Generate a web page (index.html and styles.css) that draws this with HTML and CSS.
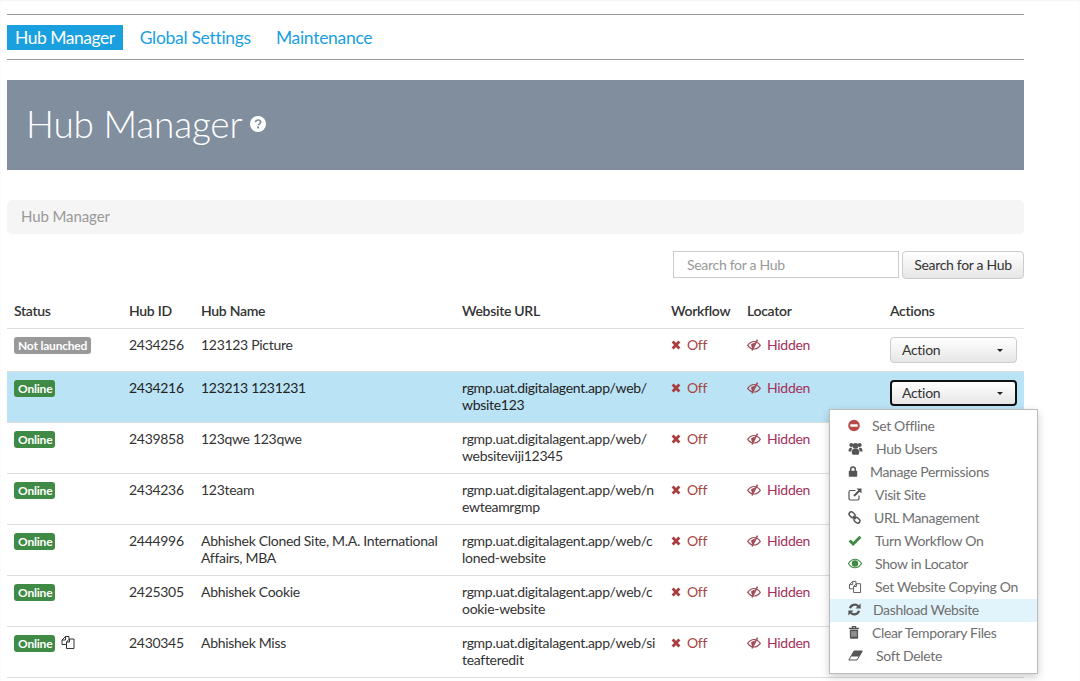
FILE: index.html
```html
<!DOCTYPE html>
<html lang="en">
<head>
<meta charset="utf-8">
<title>Hub Manager</title>
<link rel="stylesheet" href="styles.css">
</head>
<body>
<svg class="defs" width="0" height="0" aria-hidden="true">
  <symbol id="i-times" viewBox="0 0 12 12"><path d="M2.6 2.6l6.8 6.8M9.400 2.600l-6.800 6.800" fill="none" stroke="currentColor" stroke-width="2.800"/></symbol>
  <symbol id="i-slash" viewBox="0 0 14 12"><path d="M.7 6.300C2.500 3.800 4.600 2.500 7 2.500s4.500 1.300 6.300 3.800C11.500 8.800 9.400 10 7 10S2.500 8.800.7 6.300z" fill="none" stroke="currentColor" stroke-width="1.200"/><path d="M4.300 5l3.900-1.400L5.800 9.500C4.600 8.500 3.900 6.500 4.300 5z" fill="currentColor"/><path d="M10.500.6L5 11.500" fill="none" stroke="currentColor" stroke-width="1.500"/></symbol>
  <symbol id="i-copy" viewBox="0 0 14 14"><path d="M1 9.500V5l3.500-3.500H8V4M1 9.500h4M1 5h3.500V1.500M5.500 6.800l3-2.800H13v9.500H5.500zM8.500 4v3h-3" fill="none" stroke="currentColor" stroke-width="1"/></symbol>
  <symbol id="i-minus" viewBox="0 0 12 12"><circle cx="6" cy="6" r="5.800" fill="currentColor"/><rect x="2.300" y="4.800" width="7.400" height="2.400" fill="#fff"/></symbol>
  <symbol id="i-users" viewBox="0 0 14 13"><circle cx="2.800" cy="3" r="2" fill="currentColor"/><circle cx="11.200" cy="3" r="2" fill="currentColor"/><circle cx="7" cy="3.800" r="2.900" fill="currentColor"/><path d="M0 9C0 7 .8 5.700 2 5.700h1.800C3.200 6.700 2.900 8 2.900 9.500H1C.4 9.500 0 9.400 0 9zM14 9c0-2-.8-3.300-2-3.300h-1.800c.6 1 .9 2.300.9 3.800H13c.6 0 1-.1 1-.5z" fill="currentColor"/><path d="M3.300 10.500c0-2.300.9-3.800 2-3.800h3.400c1.100 0 2 1.500 2 3.800 0 1.500-.8 2.300-1.800 2.300H5.100c-1 0-1.800-.8-1.800-2.300z" fill="currentColor"/></symbol>
  <symbol id="i-lock" viewBox="0 0 10 12"><path d="M2.700 5.500V3.800a2.300 2.300 0 0 1 4.600 0v1.700" fill="none" stroke="currentColor" stroke-width="1.500"/><rect x="0.800" y="5.300" width="8.400" height="5.900" rx="0.700" fill="currentColor"/></symbol>
  <symbol id="i-ext" viewBox="0 0 14 13"><path d="M11 7.500v3a1.500 1.500 0 0 1-1.500 1.500h-7A1.500 1.500 0 0 1 1 10.500v-6.500A1.500 1.500 0 0 1 2.500 2.500h5" fill="none" stroke="currentColor" stroke-width="1.200"/><path d="M8.500 0.500h5v5l-1.800-1.800-5 5-1.400-1.400 5-5z" fill="currentColor"/></symbol>
  <symbol id="i-link" viewBox="0 0 13 13"><g fill="none" stroke="currentColor" stroke-width="1.500"><rect x="0.900" y="1.500" width="6.400" height="4.400" rx="2.200" transform="rotate(42 4 3.700)"/><rect x="5.700" y="7.100" width="6.400" height="4.400" rx="2.200" transform="rotate(42 9 9.300)"/></g><path d="M5 5l3 3" stroke="currentColor" stroke-width="1.200"/></symbol>
  <symbol id="i-check" viewBox="0 0 13 11"><path d="M1.500 5.500l3.300 3.300 6.700-6.800" fill="none" stroke="currentColor" stroke-width="2.700"/></symbol>
  <symbol id="i-eye" viewBox="0 0 14 10"><path d="M.5 5C2.200 2.100 4.500.7 7 .7s4.800 1.400 6.500 4.300C11.800 7.900 9.500 9.300 7 9.300S2.200 7.900.5 5z" fill="none" stroke="currentColor" stroke-width="1.100"/><circle cx="7" cy="5" r="3.200" fill="currentColor"/></symbol>
  <symbol id="i-sync" viewBox="0 0 13 13"><path d="M2 5.200A4.800 4.800 0 0 1 10.200 3.200" fill="none" stroke="currentColor" stroke-width="2.300"/><path d="M12.600.5v5.100H7.500z" fill="currentColor"/><path d="M11 7.800A4.800 4.800 0 0 1 2.800 9.800" fill="none" stroke="currentColor" stroke-width="2.300"/><path d="M.4 12.500V7.400h5.100z" fill="currentColor"/></symbol>
  <symbol id="i-trash" viewBox="0 0 10 12"><path d="M3.500 1.600V.6h3v1M.3 2.200h9.400" fill="none" stroke="currentColor" stroke-width="1.100"/><path d="M1.200 3.300h7.600v7.500c0 .6-.4.900-.9.900H2.100c-.5 0-.9-.3-.9-.9z" fill="currentColor"/><path d="M3.200 4.800v5M5 4.800v5M6.800 4.800v5" stroke="#fff" stroke-width=".6"/></symbol>
  <symbol id="i-eraser" viewBox="0 0 15 11"><path d="M6 1h8.300L9 10H.8z" fill="none" stroke="currentColor" stroke-width="1"/><path d="M6 1h8.300l-3 5.500H3.300z" fill="currentColor"/></symbol>
</svg>

<nav class="tabs">
  <a class="tab active">Hub Manager</a>
  <a class="tab">Global Settings</a>
  <a class="tab">Maintenance</a>
</nav>

<header class="banner">
  <h1 class="title">Hub Manager</h1>
  <svg class="help" viewBox="0 0 16 16" aria-hidden="true"><circle cx="8" cy="8" r="8" fill="#fff"/><path d="M5.500 6.300C5.600 4.800 6.700 4 8.100 4c1.500 0 2.500.9 2.500 2.100 0 1.800-2.100 1.800-2.100 3.200" fill="none" stroke="#818e9e" stroke-width="1.700"/><rect x="7.100" y="10.400" width="2" height="2" fill="#818e9e"/></svg>
</header>

<div class="crumb">Hub Manager</div>

<form class="search">
  <input class="search-input" type="text" placeholder="Search for a Hub">
  <button class="btn search-btn" type="button">Search for a Hub</button>
</form>

<table class="hubs">
  <colgroup>
    <col class="c-status"><col class="c-id"><col class="c-name"><col class="c-url"><col class="c-wf"><col class="c-loc"><col class="c-act">
  </colgroup>
  <thead>
    <tr><th>Status</th><th>Hub ID</th><th>Hub Name</th><th>Website URL</th><th>Workflow</th><th>Locator</th><th>Actions</th></tr>
  </thead>
  <tbody>
    <tr>
      <td><span class="badge grey">Not launched</span></td><td>2434256</td><td>123123 Picture</td><td class="url"></td>
      <td class="off"><svg class="ic-x"><use href="#i-times"/></svg>Off</td>
      <td class="hid"><svg class="ic-h"><use href="#i-slash"/></svg>Hidden</td>
      <td class="act"><button class="btn action" type="button">Action<span class="caret"></span></button></td>
    </tr>
    <tr class="selected">
      <td><span class="badge green">Online</span></td><td>2434216</td><td>123213 1231231</td><td class="url">rgmp.uat.digitalagent.app/web/wbsite123</td>
      <td class="off"><svg class="ic-x"><use href="#i-times"/></svg>Off</td>
      <td class="hid"><svg class="ic-h"><use href="#i-slash"/></svg>Hidden</td>
      <td class="act">
        <button class="btn action focused" type="button">Action<span class="caret"></span></button>
        <ul class="menu">
          <li class="item"><svg class="mi red w-a"><use href="#i-minus"/></svg>Set Offline</li>
          <li class="item"><svg class="mi w-b"><use href="#i-users"/></svg>Hub Users</li>
          <li class="item"><svg class="mi w-c"><use href="#i-lock"/></svg>Manage Permissions</li>
          <li class="item"><svg class="mi w-d"><use href="#i-ext"/></svg>Visit Site</li>
          <li class="item"><svg class="mi w-e"><use href="#i-link"/></svg>URL Management</li>
          <li class="item"><svg class="mi grn w-d"><use href="#i-check"/></svg>Turn Workflow On</li>
          <li class="item"><svg class="mi grn w-d"><use href="#i-eye"/></svg>Show in Locator</li>
          <li class="item"><svg class="mi w-d"><use href="#i-copy"/></svg>Set Website Copying On</li>
          <li class="item hover"><svg class="mi w-f"><use href="#i-sync"/></svg>Dashload Website</li>
          <li class="item"><svg class="mi w-a"><use href="#i-trash"/></svg>Clear Temporary Files</li>
          <li class="item"><svg class="mi w-b"><use href="#i-eraser"/></svg>Soft Delete</li>
        </ul>
      </td>
    </tr>
    <tr>
      <td><span class="badge green">Online</span></td><td>2439858</td><td>123qwe 123qwe</td><td class="url">rgmp.uat.digitalagent.app/web/websiteviji12345</td>
      <td class="off"><svg class="ic-x"><use href="#i-times"/></svg>Off</td>
      <td class="hid"><svg class="ic-h"><use href="#i-slash"/></svg>Hidden</td>
      <td class="act"></td>
    </tr>
    <tr>
      <td><span class="badge green">Online</span></td><td>2434236</td><td>123team</td><td class="url">rgmp.uat.digitalagent.app/web/newteamrgmp</td>
      <td class="off"><svg class="ic-x"><use href="#i-times"/></svg>Off</td>
      <td class="hid"><svg class="ic-h"><use href="#i-slash"/></svg>Hidden</td>
      <td class="act"></td>
    </tr>
    <tr>
      <td><span class="badge green">Online</span></td><td>2444996</td><td>Abhishek Cloned Site, M.A. International Affairs, MBA</td><td class="url">rgmp.uat.digitalagent.app/web/cloned-website</td>
      <td class="off"><svg class="ic-x"><use href="#i-times"/></svg>Off</td>
      <td class="hid"><svg class="ic-h"><use href="#i-slash"/></svg>Hidden</td>
      <td class="act"></td>
    </tr>
    <tr>
      <td><span class="badge green">Online</span></td><td>2425305</td><td>Abhishek Cookie</td><td class="url">rgmp.uat.digitalagent.app/web/cookie-website</td>
      <td class="off"><svg class="ic-x"><use href="#i-times"/></svg>Off</td>
      <td class="hid"><svg class="ic-h"><use href="#i-slash"/></svg>Hidden</td>
      <td class="act"></td>
    </tr>
    <tr>
      <td><span class="badge green">Online</span><svg class="ic-copy"><use href="#i-copy"/></svg></td><td>2430345</td><td>Abhishek Miss</td><td class="url">rgmp.uat.digitalagent.app/web/siteafteredit</td>
      <td class="off"><svg class="ic-x"><use href="#i-times"/></svg>Off</td>
      <td class="hid"><svg class="ic-h"><use href="#i-slash"/></svg>Hidden</td>
      <td class="act"></td>
    </tr>
  </tbody>
</table>
</body>
</html>
```

FILE: styles.css
```css
* { box-sizing: border-box; }
html, body { margin: 0; height: 681px; overflow: hidden; background: #fff; }
body {
  padding: 14px 56px 0 7px;
  font: 14px/17px Lato, "Liberation Sans", sans-serif;
  letter-spacing: -.3px;
  color: #333;
  box-shadow: inset 0 1px 2px rgba(0, 0, 0, .05);
}
.defs { position: absolute; }

.tabs {
  display: flex;
  align-items: center;
  height: 46px;
  border-top: 1px solid #999;
  border-bottom: 1px solid #999;
}
.tab {
  padding: 0 8px;
  height: 25px;
  margin-right: 9px;
  font-size: 17.500px;
  line-height: 25px;
  color: #1a9fdf;
}
.tab.active { background: #1a9fdf; color: #fff; letter-spacing: -.48px; }

.banner {
  display: flex;
  align-items: center;
  height: 90px;
  margin-top: 20px;
  padding-left: 19px;
  background: #818e9e;
  color: #fff;
}
.title { margin: -2px 0 0; font-size: 37px; line-height: 48px; font-weight: 300; letter-spacing: -.2px; }
.help { width: 16px; height: 16px; margin-left: 8px; margin-top: -2px; }

.crumb {
  height: 34px;
  margin-top: 30px;
  padding: 8px 14px;
  border-radius: 5px;
  background: #f5f5f5;
  color: #999;
  font-size: 15px;
  letter-spacing: -.1px;
}

.search { display: flex; justify-content: flex-end; gap: 3px; margin-top: 17px; }
.search-input {
  width: 226px;
  height: 27px;
  padding: 0 13px;
  border: 1px solid #ccc;
  font: inherit;
  letter-spacing: inherit;
  color: #555;
}
.search-input::placeholder { color: #999; opacity: 1; }

.btn {
  border: 1px solid #ccc;
  border-radius: 4px;
  background: linear-gradient(#fff, #e6e6e6);
  font: inherit;
  letter-spacing: inherit;
  color: #333;
  padding: 0;
}
.search-btn { width: 122px; height: 28px; padding-bottom: 2px; }

.hubs { width: 1017px; margin-top: 16px; border-collapse: collapse; table-layout: fixed; }
.c-status { width: 115px; }
.c-id { width: 72px; }
.c-name { width: 261px; }
.c-url { width: 209px; }
.c-wf { width: 76px; }
.c-loc { width: 143px; }
.c-act { width: 141px; }

.hubs th, .hubs td { padding: 7px 7px 9px; vertical-align: top; text-align: left; }
.hubs th { font-weight: 600; }
.hubs td { border-top: 1px solid #ddd; }
.hubs thead th { border-bottom: 1px solid #ddd; }
.hubs .url { word-break: break-all; padding-right: 8.750px; }
.hubs tr:last-child td { border-bottom: 1px solid #ddd; }
.selected td { background: #bae3f5; color: #222; }
.hubs .act { position: relative; padding-top: 8px; padding-bottom: 8px; }

.badge {
  display: inline-block;
  height: 17px;
  margin-top: 1px;
  padding: 0 4px;
  border-radius: 3px;
  color: #fff;
  font-size: 12px;
  font-weight: 700;
  line-height: 17px;
  letter-spacing: -.2px;
  vertical-align: top;
}
.green { padding-right: 3px; }
.grey { background: #999; }
.green { background: #3f8a45; }

.hubs .off { color: #a94442; }
.hubs .hid { color: #a5305a; }
.ic-x { width: 12px; height: 12px; margin: 0 5px 0 -1px; color: #a93c3c; vertical-align: -1px; }
.ic-h { width: 14px; height: 12px; margin-right: 6px; color: #a04a55; vertical-align: -1px; }
.ic-copy { width: 14px; height: 14px; margin-left: 6px; color: #333; vertical-align: -1px; }

.action {
  display: flex;
  align-items: center;
  justify-content: space-between;
  width: 127px;
  height: 26px;
  padding: 0 13px 2px 11px;
}
.focused { border: 2px solid #111; padding-left: 10px; padding-right: 12px; padding-bottom: 1px; }
.caret {
  width: 0;
  height: 0;
  margin-top: 2px;
  border-left: 3px solid transparent;
  border-right: 3px solid transparent;
  border-top: 3px solid #222;
}

.menu {
  position: absolute;
  top: 37px;
  left: -54px;
  width: 209px;
  margin: 0;
  padding: 5px 0;
  list-style: none;
  background: #fff;
  border: 1px solid #bbb;
  box-shadow: 0 3px 8px rgba(0, 0, 0, .2);
  z-index: 2;
}
.item {
  display: flex;
  align-items: center;
  height: 23px;
  padding: 0 0 3px 18px;
  color: #6f6f6f;
  letter-spacing: -.35px;
}
.hover { background: #e2f4fb; }
.mi { height: 13px; color: #555; flex: none; }
.red { color: #b94a4a; }
.grn { color: #3f8a45; }
.w-a { width: 12px; margin-right: 12px; }
.w-b { width: 15px; margin-right: 13px; }
.w-c { width: 10px; margin-right: 12px; }
.w-d { width: 14px; margin-right: 13px; }
.w-e { width: 13px; margin-right: 13px; }
.w-f { width: 13px; margin-right: 12px; }
```
